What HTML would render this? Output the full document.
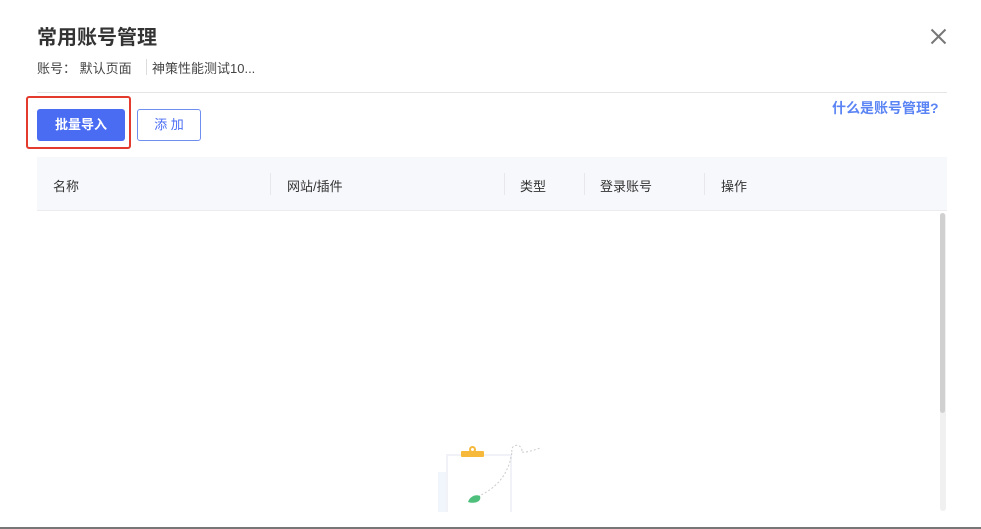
<!DOCTYPE html>
<html><head><meta charset="utf-8"><style>
*{margin:0;padding:0;box-sizing:border-box}
body{width:981px;height:529px;background:#fff;position:relative;overflow:hidden;font-family:"Liberation Sans","Noto Sans CJK SC",sans-serif;color:#333}
.a{position:absolute}
.h{font-size:13px;color:#333;top:176px}
.sep{position:absolute;top:173px;width:1px;height:22px;background:#e8e8ec}
</style></head><body>
<div class="a" style="left:37px;top:21px;font-size:20px;font-weight:bold;color:#333">常用账号管理</div>
<div class="a" style="left:37px;top:58px;font-size:13px;color:#444">账号：&nbsp;默认页面</div>
<div class="a" style="left:146px;top:59px;width:1px;height:16px;background:#ddd"></div>
<div class="a" style="left:152px;top:58px;font-size:13px;color:#444">神策性能测试10...</div>
<svg class="a" style="left:930px;top:28px" width="17" height="17"><path d="M1.5 1.5L15.5 15.5M15.5 1.5L1.5 15.5" stroke="#777" stroke-width="2"/></svg>
<div class="a" style="left:37px;top:92px;width:910px;height:1px;background:#e5e5e5"></div>
<div class="a" style="left:832px;top:98px;font-size:14px;font-weight:bold;color:#5b84f4">什么是账号管理?</div>
<div class="a" style="left:26px;top:96px;width:105px;height:53px;border:2px solid #e53a2e;border-radius:3px"></div>
<div class="a" style="left:37px;top:109px;width:88px;height:32px;background:#4a6cf3;border-radius:3px;color:#fff;font-size:13px;font-weight:bold;text-align:center;line-height:32px">批量导入</div>
<div class="a" style="left:137px;top:109px;width:64px;height:32px;border:1px solid #6f8ff0;border-radius:3px;color:#4a6cf3;font-size:13px;text-align:center;line-height:30px">添 加</div>
<div class="a" style="left:37px;top:157px;width:910px;height:54px;background:#f7f8fc;border-bottom:1px solid #ececf0"></div>
<div class="a h" style="left:53px">名称</div>
<div class="sep" style="left:270px"></div>
<div class="a h" style="left:287px">网站/插件</div>
<div class="sep" style="left:504px"></div>
<div class="a h" style="left:520px">类型</div>
<div class="sep" style="left:584px"></div>
<div class="a h" style="left:600px">登录账号</div>
<div class="sep" style="left:704px"></div>
<div class="a h" style="left:721px">操作</div>
<div class="a" style="left:940px;top:213px;width:6px;height:298px;background:#f0f0f0;border-radius:3px"></div>
<div class="a" style="left:940px;top:213px;width:5px;height:200px;background:#d0d0d0;border-radius:3px"></div>
<div class="a" style="left:438px;top:472px;width:8px;height:40px;background:#f1f6fc"></div>
<div class="a" style="left:446px;top:454px;width:66px;height:58px;border:2px solid #f0f2f7;border-bottom:none"></div>
<div class="a" style="left:461px;top:451px;width:23px;height:6px;background:#f6b93b;border-radius:1px"></div>
<div class="a" style="left:469px;top:446px;width:7px;height:7px;border:2px solid #f6b93b;border-radius:50%"></div>
<svg class="a" style="left:460px;top:440px" width="85" height="70"><path d="M14 58C30 52 48 40 52 12M52 12C50 5 60 2 62 10C58 14 70 12 80 8" stroke="#ccc" fill="none" stroke-dasharray="2 2"/><path d="M8 62C10 56 16 54 20 56C22 62 14 64 8 62Z" fill="#4fc07c"/></svg>
<div class="a" style="left:0;top:527px;width:981px;height:2px;background:#777"></div>
</body></html>
